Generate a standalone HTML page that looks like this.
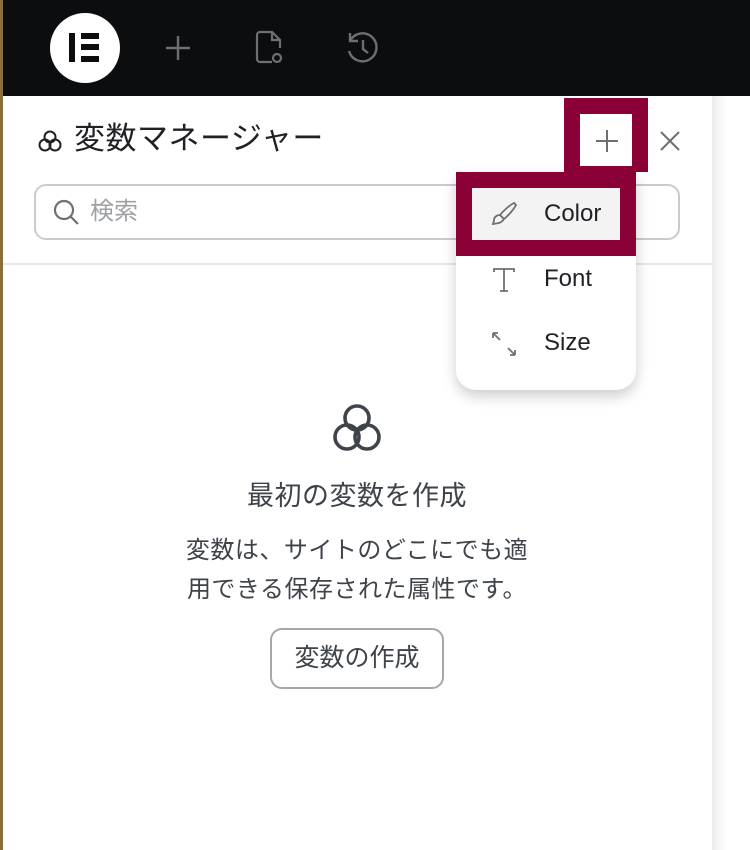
<!DOCTYPE html>
<html><head><meta charset="utf-8"><style>
*{margin:0;padding:0;box-sizing:border-box}
body{width:750px;height:850px;overflow:hidden;background:#fff;position:relative;font-family:"Liberation Sans","Noto Sans CJK JP",sans-serif}
.top{position:absolute;left:0;top:0;width:750px;height:96px;background:#0c0d0e}
.gold{position:absolute;left:0;top:0;width:3px;height:850px;background:#8a6f3a}
.shade{position:absolute;left:712px;top:96px;width:14px;height:754px;background:linear-gradient(90deg,#ececec,#fff)}
.abs{position:absolute}
.t{color:#1f2124}
</style></head><body>
<div class="top"></div>
<div class="gold"></div>
<div class="shade"></div>
<div class="abs" style="left:50px;top:13px;width:70px;height:70px;border-radius:50%;background:#fff"></div>
<div class="abs" style="left:69px;top:33px;width:6px;height:29px;background:#0c0d0e"></div>
<div class="abs" style="left:81px;top:33px;width:18px;height:6px;background:#0c0d0e"></div>
<div class="abs" style="left:81px;top:44px;width:18px;height:6px;background:#0c0d0e"></div>
<div class="abs" style="left:81px;top:56px;width:18px;height:6px;background:#0c0d0e"></div>
<svg class="abs" style="left:160px;top:30px" width="36" height="36" viewBox="0 0 36 36" fill="none" stroke="#6d6f72" stroke-width="2.4"><path d="M18 6v24M6 18h24"/></svg>
<svg class="abs" style="left:250px;top:28px" width="40" height="40" viewBox="0 0 40 40" fill="none" stroke="#6d6f72" stroke-width="2.2"><path d="M22 34H10a3 3 0 0 1-3-3V7a3 3 0 0 1 3-3h12l8 8v8M22 4v8h8"/><circle cx="27" cy="30" r="4"/></svg>
<svg class="abs" style="left:343px;top:29px" width="40" height="38" viewBox="0 0 40 38" fill="none" stroke="#6d6f72" stroke-width="2.4"><path d="M7 12A14 14 0 1 1 6 22M7 4v8h8M20 11v9l5 4"/></svg>
<svg class="abs" style="left:36px;top:128px" width="28" height="28" viewBox="0 0 28 28" fill="none" stroke="#1f2124" stroke-width="2"><circle cx="14" cy="9" r="5.5"/><circle cx="9" cy="17" r="5.5"/><circle cx="19" cy="17" r="5.5"/></svg>
<div class="abs t" style="left:74px;top:118px;font-size:31px;line-height:42px;letter-spacing:0.5px">変数マネージャー</div>
<svg class="abs" style="left:655px;top:126px" width="30" height="30" viewBox="0 0 30 30" stroke="#6d6f72" stroke-width="2"><path d="M6 6l18 18M24 6L6 24"/></svg>
<div class="abs" style="left:34px;top:184px;width:646px;height:56px;border:2px solid #c9cbcd;border-radius:12px"></div>
<svg class="abs" style="left:52px;top:198px" width="30" height="30" viewBox="0 0 30 30" fill="none" stroke="#6d6f72" stroke-width="2.2"><circle cx="12" cy="12" r="9"/><path d="M19 19l7 7"/></svg>
<div class="abs" style="left:90px;top:195px;font-size:24px;line-height:34px;color:#9da0a5">検索</div>
<div class="abs" style="left:3px;top:263px;width:709px;height:2px;background:#e6e8ea"></div>
<svg class="abs" style="left:326px;top:400px" width="62" height="62" viewBox="0 0 62 62" fill="none" stroke="#3f444b" stroke-width="3.6"><circle cx="31" cy="18" r="12"/><circle cx="21" cy="37" r="12"/><circle cx="41" cy="37" r="12"/></svg>
<div class="abs" style="left:0;width:714px;top:477px;text-align:center;font-size:27px;line-height:38px;color:#3f444b;letter-spacing:0.5px">最初の変数を作成</div>
<div class="abs" style="left:0;width:714px;top:531px;text-align:center;font-size:24px;line-height:39px;color:#3f444b;letter-spacing:0.5px">変数は、サイトのどこにでも適<br>用できる保存された属性です。</div>
<div class="abs" style="left:270px;top:628px;width:174px;height:61px;border:2px solid #a4a7ab;border-radius:12px;text-align:center;font-size:25px;line-height:57px;color:#3f444b">変数の作成</div>
<div class="abs" style="left:564px;top:98px;width:84px;height:74px;background:#8c0038"></div>
<div class="abs" style="left:580px;top:114px;width:52px;height:52px;background:#fff"></div>
<svg class="abs" style="left:594px;top:128px" width="26" height="26" viewBox="0 0 26 26" stroke="#6d6f72" stroke-width="2"><path d="M13 2v22M2 13h22"/></svg>
<div class="abs" style="left:456px;top:172px;width:180px;height:218px;background:#fff;border-radius:6px 6px 20px 20px;box-shadow:0 6px 14px rgba(0,0,0,.2)"></div>
<div class="abs" style="left:456px;top:172px;width:180px;height:84px;background:#8c0038"></div>
<div class="abs" style="left:472px;top:188px;width:148px;height:52px;background:#f3f3f4"></div>
<svg class="abs" style="left:488px;top:200px" width="32" height="30" viewBox="0 0 32 30" fill="none" stroke="#6d6f72" stroke-width="1.8"><path d="M26 3c-4 2-10 7-14 12l4 4c5-4 10-10 12-14zM12 15c-3 0-6 2-6 5l-1 4 6-1c3-1 5-4 5-4"/></svg>
<div class="abs t" style="left:544px;top:199px;font-size:24px;line-height:30px">Color</div>
<svg class="abs" style="left:491px;top:266px" width="26" height="28" viewBox="0 0 26 28" fill="none" stroke="#6d6f72" stroke-width="1.8"><path d="M3 6V3h20v3M13 3v22M9 25h8"/></svg>
<div class="abs t" style="left:544px;top:264px;font-size:24px;line-height:30px">Font</div>
<svg class="abs" style="left:490px;top:330px" width="28" height="28" viewBox="0 0 28 28" fill="none" stroke="#6d6f72" stroke-width="1.8"><path d="M3 3l7 7M3 3h5M3 3v5M25 25l-7-7M25 25h-5M25 25v-5"/></svg>
<div class="abs t" style="left:544px;top:328px;font-size:24px;line-height:30px">Size</div>
</body></html>
